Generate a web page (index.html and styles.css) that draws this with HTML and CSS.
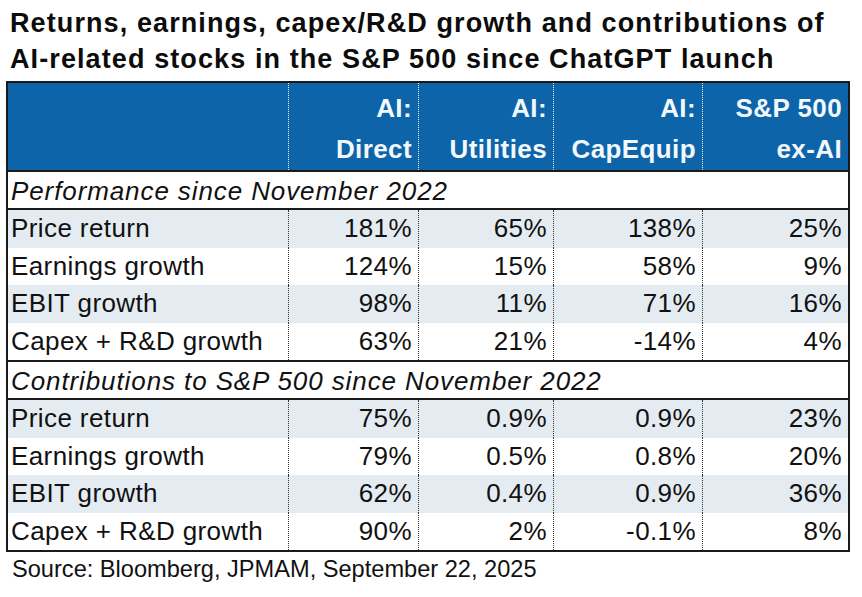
FILE: index.html
```html
<!DOCTYPE html>
<html>
<head>
<meta charset="utf-8">
<link rel="stylesheet" href="styles.css">
</head>
<body>
<div class="page">
  <h1 class="title">Returns, earnings, capex/R&amp;D growth and contributions of<br>AI-related stocks in the S&amp;P 500 since ChatGPT launch</h1>
  <div class="table">
    <div class="row head">
      <div class="cell"></div>
      <div class="cell num">AI:<br>Direct</div>
      <div class="cell num">AI:<br>Utilities</div>
      <div class="cell num">AI:<br>CapEquip</div>
      <div class="cell num">S&amp;P 500<br>ex-AI</div>
    </div>
    <div class="section">Performance since November 2022</div>
    <div class="row data shade">
      <div class="cell">Price return</div>
      <div class="cell num">181%</div>
      <div class="cell num">65%</div>
      <div class="cell num">138%</div>
      <div class="cell num">25%</div>
    </div>
    <div class="row data">
      <div class="cell">Earnings growth</div>
      <div class="cell num">124%</div>
      <div class="cell num">15%</div>
      <div class="cell num">58%</div>
      <div class="cell num">9%</div>
    </div>
    <div class="row data shade">
      <div class="cell">EBIT growth</div>
      <div class="cell num">98%</div>
      <div class="cell num">11%</div>
      <div class="cell num">71%</div>
      <div class="cell num">16%</div>
    </div>
    <div class="row data">
      <div class="cell">Capex + R&amp;D growth</div>
      <div class="cell num">63%</div>
      <div class="cell num">21%</div>
      <div class="cell num">-14%</div>
      <div class="cell num">4%</div>
    </div>
    <div class="section">Contributions to S&amp;P 500 since November 2022</div>
    <div class="row data shade">
      <div class="cell">Price return</div>
      <div class="cell num">75%</div>
      <div class="cell num">0.9%</div>
      <div class="cell num">0.9%</div>
      <div class="cell num">23%</div>
    </div>
    <div class="row data">
      <div class="cell">Earnings growth</div>
      <div class="cell num">79%</div>
      <div class="cell num">0.5%</div>
      <div class="cell num">0.8%</div>
      <div class="cell num">20%</div>
    </div>
    <div class="row data shade">
      <div class="cell">EBIT growth</div>
      <div class="cell num">62%</div>
      <div class="cell num">0.4%</div>
      <div class="cell num">0.9%</div>
      <div class="cell num">36%</div>
    </div>
    <div class="row data">
      <div class="cell">Capex + R&amp;D growth</div>
      <div class="cell num">90%</div>
      <div class="cell num">2%</div>
      <div class="cell num">-0.1%</div>
      <div class="cell num">8%</div>
    </div>
  </div>
  <p class="source">Source: Bloomberg, JPMAM, September 22, 2025</p>
</div>
</body>
</html>
```

FILE: styles.css
```css
* { box-sizing: border-box; }
html, body { margin: 0; padding: 0; background: #ffffff; }
body { font-family: "Liberation Sans", Arial, sans-serif; color: #111111; }
.page { width: 862px; height: 597px; padding-top: 5px; overflow: hidden; }
.title {
  margin: 0;
  padding-left: 10px;
  font-size: 27px;
  line-height: 36px;
  font-weight: bold;
  letter-spacing: 1.1px;
  color: #0c0c0c;
}
.table {
  margin: 4px 0 0 6px;
  width: 844px;
  border: 2px solid #1a1a1a;
}
.row {
  display: grid;
  grid-template-columns: 280px 130px 135px 149px 146px;
}
.cell {
  font-size: 26px;
  letter-spacing: 0.4px;
  padding-left: 3px;
  white-space: nowrap;
}
.cell + .cell { border-left: 1px dotted #333333; }
.num { text-align: right; padding-right: 6px; padding-left: 0; }
.head { background: #0d64a8; height: 87px; }
.head .cell {
  color: #f2f8fc;
  font-weight: bold;
  line-height: 41px;
  padding-top: 5px;
}
.head .cell + .cell { border-left: 1px dotted #e8f0f8; }
.section {
  border-top: 2px solid #1a1a1a;
  border-bottom: 2px solid #1a1a1a;
  height: 40px;
  padding: 1px 0 0 3px;
  font-size: 26px;
  line-height: 36px;
  font-style: italic;
  letter-spacing: 0.9px;
  white-space: nowrap;
}
.data { height: 37.5px; }
.data .cell { line-height: 37.5px; }
.shade { background: #e4ecf2; }
.source {
  margin: 2px 0 0 0;
  padding-left: 12px;
  font-size: 23.6px;
  line-height: 30px;
  color: #111111;
}
```
